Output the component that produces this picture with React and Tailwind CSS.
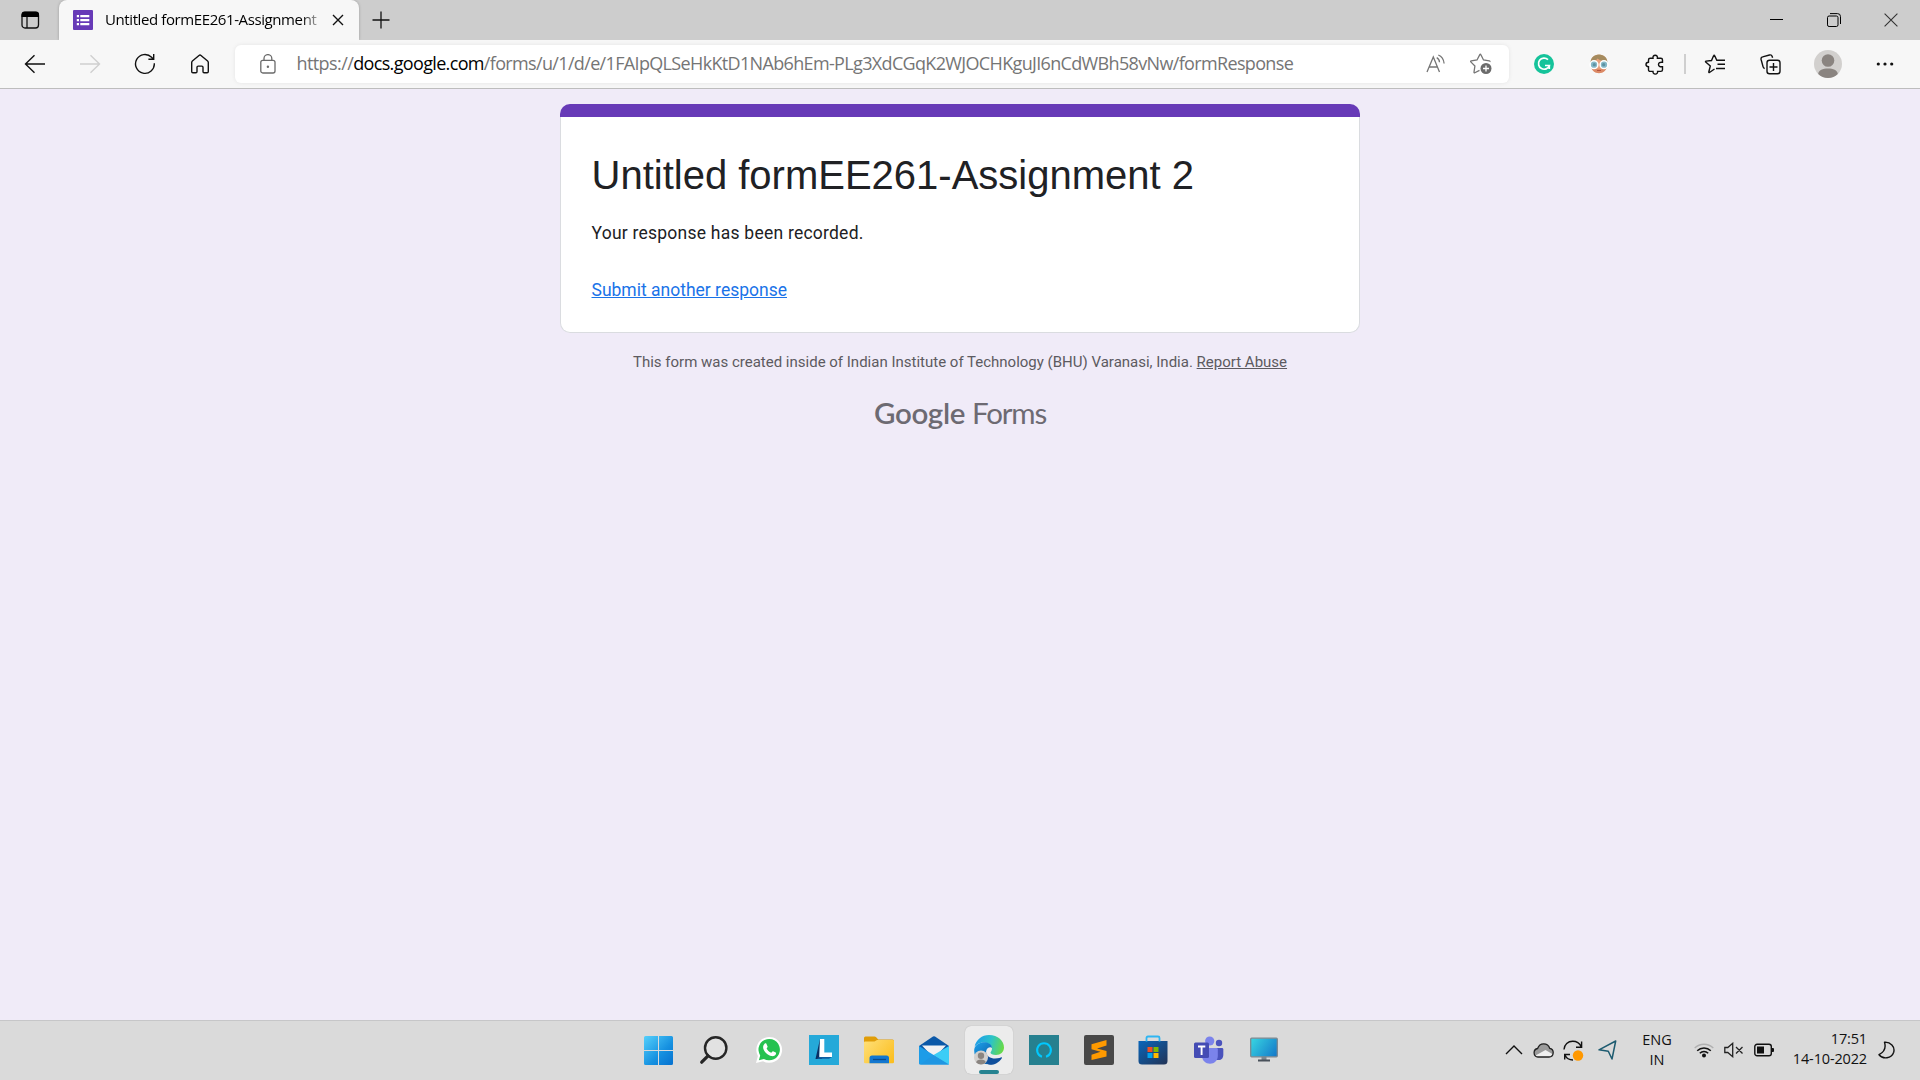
import React from "react";

function Icon({ w, h, className = "", children, ...rest }) {
  return (
    <svg
      width={w}
      height={h}
      viewBox={`0 0 ${w} ${h}`}
      fill="none"
      className={`shrink-0 ${className}`}
      {...rest}
    >
      {children}
    </svg>
  );
}

function Cell({ className = "w-[55px]", children }) {
  return <div className={`flex h-full shrink-0 items-center justify-center ${className}`}>{children}</div>;
}

function TitleBar() {
  return (
    <div className="flex h-10 items-stretch bg-[#cdcdcd]">
      <div className="flex w-[59px] items-center justify-center">
        <Icon w={20} h={20}>
          <rect x="2" y="2.5" width="16.5" height="15.5" rx="3" stroke="#111" strokeWidth="1.3" />
          <path d="M1.5 7V4.5a3 3 0 0 1 3-3h11.5a3 3 0 0 1 3 3V7z" fill="#000" />
          <path d="M7 7v11" stroke="#111" strokeWidth="1.3" />
        </Icon>
      </div>
      <div className="flex w-[300px] items-center rounded-t-lg bg-[#f7f7f7] pl-[14px] shadow-[0_0_3px_rgba(0,0,0,0.25)]">
        <Icon w={20} h={20}>
          <rect width="20" height="20" rx="1" fill="#673ab7" />
          <path d="M7.3 5h9v2.2h-9zM7.3 9h9v2.2h-9zM7.3 13h9v2.2h-9z" fill="#fff" />
          <path d="M3.8 5H6v2.2H3.8zM3.8 9H6v2.2H3.8zM3.8 13H6v2.2H3.8z" fill="#fff" />
        </Icon>
        <div className="mb-[2px] ml-3 w-[213px] whitespace-nowrap bg-linear-to-r from-black from-92% to-black/30 to-100% bg-clip-text text-[15px] leading-5 tracking-[-0.4px] text-transparent">
          Untitled formEE261-Assignment
        </div>
        <Icon w={12} h={12} className="ml-[14px]">
          <path d="M1 1l10 10M11 1L1 11" stroke="#111" strokeWidth="1.4" />
        </Icon>
      </div>
      <div className="flex w-[44px] items-center justify-center">
        <Icon w={18} h={18}>
          <path d="M9 .5v17M.5 9h17" stroke="#111" strokeWidth="1.3" />
        </Icon>
      </div>
      <div className="flex-1" />
      <div className="mb-px flex w-[173px] items-center">
        <Cell className="w-[59px]">
          <Icon w={13} h={13}>
            <path d="M0 6.5h13" stroke="#000" />
          </Icon>
        </Cell>
        <Cell className="w-[56px]">
          <Icon w={14} h={14}>
            <rect x=".5" y="3" width="10.5" height="10.5" rx="1.6" stroke="#000" />
            <path d="M3 .6h7.5a3 3 0 0 1 3 3V11" stroke="#000" />
          </Icon>
        </Cell>
        <Cell className="w-[58px]">
          <Icon w={14} h={14}>
            <path d="M.6.6l12.8 12.8M13.4.6L.6 13.4" stroke="#333" strokeWidth="1.1" />
          </Icon>
        </Cell>
      </div>
    </div>
  );
}

function ToolBar() {
  return (
    <div className="flex h-[49px] items-center border-b border-[#bdbdbd] bg-[#f7f7f7] pl-[7px]">
      <Cell>
        <Icon w={22} h={20}>
          <path d="M21 10H1.5M10.5 1.3L1.5 10l9 8.7" stroke="#111" strokeWidth="1.4" />
        </Icon>
      </Cell>
      <Cell>
        <Icon w={22} h={20}>
          <path d="M1 10h19.5M11.5 1.3l9 8.7-9 8.7" stroke="#cfcfcf" strokeWidth="1.4" />
        </Icon>
      </Cell>
      <Cell>
        <Icon w={22} h={22}>
          <path d="M20.300 10.200A9.400 9.400 0 1 1 17.600 4.300L19 5.800M19.700 1v5.200h-5.300" stroke="#111" strokeWidth="1.4" />
        </Icon>
      </Cell>
      <Cell>
        <Icon w={20} h={20}>
          <path
            d="M1.700 8.500c0-.6.2-1.100.7-1.500L9 1.500c.6-.5 1.400-.5 2 0L17.600 7c.5.4.7.9.7 1.500v9c0 .7-.5 1.200-1.200 1.200h-3c-.6 0-1.100-.5-1.100-1.200v-4.200c0-.7-.5-1.200-1.200-1.200H8.200c-.7 0-1.200.5-1.200 1.200v4.200c0 .7-.5 1.200-1.100 1.200h-3c-.7 0-1.200-.5-1.200-1.200z"
            stroke="#111"
            strokeWidth="1.4"
          />
        </Icon>
      </Cell>
      <div className="ml-2 flex h-[38px] w-[1274px] items-center rounded-md bg-white pl-[25px] shadow-[0_0_4px_rgba(0,0,0,0.08)]">
        <Icon w={16} h={20} className="-mt-px">
          <rect x=".8" y="6.300" width="14.200" height="12.700" rx="2" stroke="#6b6b6b" strokeWidth="1.3" />
          <path d="M4 6.300V4.500a3.900 3.900 0 0 1 7.800 0v1.800" stroke="#6b6b6b" strokeWidth="1.3" />
          <circle cx="7.900" cy="12.700" r="1.200" fill="#6b6b6b" />
        </Icon>
        <div className="mb-[2px] ml-[20.500px] flex w-[1000px] whitespace-nowrap text-[18px] leading-6 tracking-[-0.655px] text-[#757575]">
          <span className="tracking-[-0.59px]">https://</span>
          <span className="text-black">docs.google.com</span>
          <span>/forms/u/1/d/e/1FAIpQLSeHkKtD1NAb6hEm-PLg3XdCGqK2WJOCHKguJI6nCdWBh58vNw/formResponse</span>
        </div>
        <div className="flex-1" />
        <Icon w={20} h={19} className="mr-[24px] -mt-px" stroke="#757575" strokeWidth="1.3">
          <path d="M1 18L7.300 3l6.200 15M3.200 13h8.200" />
          <path d="M10.700 3.600c1.700.9 2.800 2.700 2.800 4.700M12.300 1c3.200 1.200 5.400 4.300 5.800 8.500" />
        </Icon>
        <Icon w={22} h={22} className="mr-[17px]">
          <path
            d="M9.500 17.300l-4.700 2.400c-.5.300-.9 0-.8-.6l.9-6.100L.8 8.900c-.4-.4-.2-.9.400-1l5.800-.9 2.800-5.400c.3-.5.8-.5 1 0L13.500 7l5.800.9c.6.1.8.500.5.900"
            stroke="#757575"
            strokeWidth="1.3"
          />
          <circle cx="16" cy="15.500" r="5.500" fill="#6b6b6b" />
          <path d="M16 12.500v6M13 15.500h6" stroke="#fff" strokeWidth="1.3" />
        </Icon>
      </div>
      <div className="w-[7px]" />
      <Cell>
        <Icon w={20} h={20}>
          <circle cx="10" cy="10" r="10" fill="#15c39a" />
          <path d="M14 5.600A5.600 5.600 0 1 0 15.400 11.500H11M15.300 11.300V15" stroke="#fff" strokeWidth="1.7" />
        </Icon>
      </Cell>
      <Cell>
        <Icon w={20} h={20}>
          <path d="M2 8C2 3.500 5.500.8 10 .8S18 3.500 18 8v4c0 4-4 6.800-8 6.800S2 16 2 12z" fill="#e8a27c" />
          <path d="M1.500 10C1 4 5 .6 10 .6S19 4 18.500 10L16 7.500C13 7 10 6 8.500 4.500 8 6 5 7.500 3.500 8z" fill="#a58b5f" />
          <path d="M2.500 13.500c1 3.800 4 5.700 7.500 5.700s6.500-1.900 7.500-5.700c-2 1.800-13 1.800-15 0z" fill="#dc8a66" />
          <circle cx="5" cy="10.700" r="3.900" fill="#86b9c8" stroke="#fff" strokeWidth="1.5" />
          <circle cx="15" cy="10.700" r="3.900" fill="#86b9c8" stroke="#fff" strokeWidth="1.5" />
          <circle cx="5.300" cy="10.700" r="1.600" fill="#5d92a2" />
          <circle cx="14.700" cy="10.700" r="1.600" fill="#5d92a2" />
          <path d="M8 16.500h4" stroke="#b5533f" />
        </Icon>
      </Cell>
      <Cell>
        <Icon w={20} h={21} className="ml-[2px]">
          <path
            d="M5.200 4.200H8c-.3-1.900.7-3 2.200-3s2.500 1.100 2.200 3h3.400c1 0 1.700.7 1.700 1.700v2.400c-2.600-.4-4 .6-4 2.200s1.400 2.600 4 2.200v3c0 1-.7 1.700-1.700 1.700h-3.200c.2 1.700-.8 2.700-2.300 2.700S7.800 19.100 8 17.400H5.200c-1 0-1.700-.7-1.700-1.700v-3C1.800 12.600 1 11.800 1 10.500s.9-2.200 2.500-2.300V5.900c0-1 .7-1.700 1.700-1.700z"
            stroke="#111"
            strokeWidth="1.4"
          />
        </Icon>
      </Cell>
      <Cell className="w-2">
        <div className="h-5 w-[2px] bg-[#cfcfcf]" />
      </Cell>
      <Cell className="w-[52px]">
        <Icon w={22} h={20}>
          <path
            d="M10.500 15l-5 3.500c-.5.300-.8 0-.7-.5L6.300 12 1.700 8c-.4-.4-.2-.8.300-.9l5.500-.6 2.200-5c.2-.5.7-.5.900 0l2.200 4.700h8.200M13.500 10.300h7.500M12 14.500h9"
            stroke="#111"
            strokeWidth="1.4"
          />
        </Icon>
      </Cell>
      <Cell className="w-[58px]">
        <Icon w={21} h={21} stroke="#111" strokeWidth="1.4">
          <rect x="7" y="6.300" width="13" height="13.500" rx="2.500" />
          <path d="M13.500 9v8M9.500 13h8" />
          <path d="M4.700 14.500c-.9-.3-1.400-.8-1.600-1.600L1.100 5.500c-.3-1.300.2-2.300 1.500-2.600L9.500 1c1.300-.3 2.300.2 2.700 1.500l.4 1.300" />
        </Icon>
      </Cell>
      <Cell className="w-[58px]">
        <Icon w={28} h={28}>
          <circle cx="14" cy="14" r="14" fill="#d2d0ce" />
          <circle cx="14" cy="10.500" r="6.300" fill="#8a8480" />
          <path d="M4.200 24c.5-4 4.500-5.500 9.800-5.500s9.300 1.500 9.800 5.500A14 14 0 0 1 14 28a14 14 0 0 1-9.800-4z" fill="#8a8480" />
        </Icon>
      </Cell>
      <Cell className="w-[56px]">
        <Icon w={18} h={4}>
          <circle cx="2.300" cy="2" r="1.600" fill="#111" />
          <circle cx="9" cy="2" r="1.600" fill="#111" />
          <circle cx="15.700" cy="2" r="1.600" fill="#111" />
        </Icon>
      </Cell>
    </div>
  );
}

function FormPage() {
  return (
    <main className="flex flex-1 flex-col items-center bg-[#f0ebf8] pt-[15px] font-[Roboto,sans-serif]">
      <section className="w-[800px]">
        <div className="h-[13px] rounded-t-[10px] bg-[#673ab7]" />
        <div className="h-[216px] rounded-b-[10px] border border-t-0 border-[#dadce0] bg-white pl-[30.5px] text-[#202124]">
          <h1 className="h-[83px] pt-[33px] font-['Liberation_Sans',Arial,sans-serif] text-[40px] leading-[50px]">
            Untitled formEE261-Assignment 2
          </h1>
          <p className="mt-[21px] text-[17.5px] leading-[25px] tracking-[0.235px]">Your response has been recorded.</p>
          <p className="mt-8 text-[17.5px] leading-[25px]">
            <a className="text-[#1a73e8] underline">Submit another response</a>
          </p>
        </div>
      </section>
      <p className="mt-[18px] text-[15px] leading-[22px] text-[#5c5a60]">
        This form was created inside of Indian Institute of Technology (BHU) Varanasi, India.{" "}
        <a className="underline">Report Abuse</a>
      </p>
      <div className="mt-[20px] flex items-baseline gap-[7px] whitespace-nowrap font-[Lato,sans-serif] text-[29.5px] leading-[40px] text-[#6d6a72]">
        <span className="font-semibold tracking-[-0.35px]">Google</span>
        <span className="tracking-[-1.2px]">Forms</span>
      </div>
    </main>
  );
}

function TaskBar() {
  return (
    <footer className="flex h-[60px] border-t border-[#c6c6c8] bg-[#dadada] pl-[631px]">
      <div className="flex h-[58px]">
        <Cell>
          <Icon w={29} h={29}>
            <defs>
              <linearGradient id="win" x1="0" y1="0" x2="29" y2="29" gradientUnits="userSpaceOnUse">
                <stop stopColor="#55d0fb" />
                <stop offset=".6" stopColor="#1590e0" />
                <stop offset="1" stopColor="#0671cf" />
              </linearGradient>
            </defs>
            <path d="M1.500 0H14v14H0V1.500Q0 0 1.500 0zM15 0h12.500Q29 0 29 1.500V14H15zM0 15h14v14H1.500Q0 29 0 27.500zM15 15h14v12.500q0 1.500-1.500 1.500H15z" fill="url(#win)" />
          </Icon>
        </Cell>
        <Cell>
          <Icon w={29} h={29}>
            <circle cx="16.700" cy="12" r="10.700" stroke="#262626" strokeWidth="2.4" fill="#e2e2e2" />
            <path d="M9 19.800l-6.300 6.400" stroke="#262626" strokeWidth="3.2" strokeLinecap="round" />
          </Icon>
        </Cell>
        <Cell>
          <Icon w={28} h={28}>
            <path d="M1 27l1.900-6.900A12.900 12.900 0 1 1 8 25.200z" fill="#fff" />
            <path d="M3.900 24.200l1.300-4.800A10.700 10.700 0 1 1 8.900 22.900z" fill="#25c250" />
            <path d="M9.800 7.600c.5-.5 1.300-.5 1.600.1l1.200 2.700c.2.500-.7 1.500-1 1.900.9 2 2.400 3.500 4.600 4.500.5-.4 1.400-1.700 1.900-1.500l2.600 1.300c.6.300.4 1.500-.1 2.200-.8 1.100-2.400 1.700-4 1.300-4-1-7.300-4-8.400-7.900-.4-1.700.5-3.600 1.600-4.600z" fill="#fff" />
          </Icon>
        </Cell>
        <Cell>
          <Icon w={30} h={30}>
            <path d="M0 0h30v30H0z" fill="#25a9d9" />
            <path d="M11 4L6.500 24h7l-3-3z" fill="#0a2f63" />
            <path d="M11 4h4.300v13.500H23V22H10.300z" fill="#fff" />
            <path d="M10.300 22H23l-3 1.800H8z" fill="#0e5ea0" />
          </Icon>
        </Cell>
        <Cell>
          <Icon w={30} h={28}>
            <defs>
              <linearGradient id="fold" x1="0" y1="3" x2="30" y2="28" gradientUnits="userSpaceOnUse">
                <stop stopColor="#ffe07a" />
                <stop offset="1" stopColor="#fbbc1a" />
              </linearGradient>
            </defs>
            <path d="M0 2Q0 .5 1.500.500h9q1 0 1.700.8l2 2.200h14.300Q30 3.500 30 5v5H0z" fill="#e09d09" />
            <path d="M0 6.500Q0 5.500 1 5.500h9.500l2.500-1.500h16q1 0 1 1v21q0 1.300-1.300 1.300H1.300Q0 27.300 0 26z" fill="url(#fold)" />
            <path d="M5.500 27.300V22q0-2.500 2.500-2.500h14.500Q25 19.500 25 22v5.300z" fill="#1377d0" />
            <path d="M9 23.500h13" stroke="#0b4a8c" strokeWidth="1.3" />
          </Icon>
        </Cell>
        <Cell>
          <Icon w={30} h={29}>
            <path d="M0 10L14 .600q1-.6 2 0L30 10v6H0z" fill="#0b58a8" />
            <path d="M3 9.500h24L18 19h-6z" fill="#f1f1f3" />
            <path d="M0 10l30 18.500H1q-1 0-1-1z" fill="#1c9ce8" />
            <path d="M30 10v17.500q0 1-1 1L14.500 19z" fill="#3ccdf6" />
            <path d="M14.500 19L30 28.500H1z" fill="#1f96e2" />
          </Icon>
        </Cell>
        <div className="flex w-[55px] items-start justify-center pt-[5px]">
          <div className="flex h-12 w-12 shrink-0 flex-col items-center justify-between rounded-md bg-[#ececec] pt-[9px] shadow-[0_0_1px_rgba(0,0,0,0.25)]">
            <Icon w={30} h={30}>
              <defs>
                <linearGradient id="ed1" x1="2" y1="6" x2="30" y2="14" gradientUnits="userSpaceOnUse">
                  <stop stopColor="#1e9fe8" />
                  <stop offset=".5" stopColor="#2cc3c8" />
                  <stop offset="1" stopColor="#6ddc3c" />
                </linearGradient>
                <linearGradient id="ed2" x1="0" y1="10" x2="16" y2="28" gradientUnits="userSpaceOnUse">
                  <stop stopColor="#1b9de6" />
                  <stop offset="1" stopColor="#0c59a4" />
                </linearGradient>
              </defs>
              <path d="M.5 12C2 4.500 8 0 15 0c9 0 15 6 15 12.500 0 4.500-3.500 7.500-8 7.500-3.500 0-5.500-1.300-5.500-2.500 0-.8 1.500-1.500 1.500-4 0-3-3-6-7.500-6C6 7.500 2 9.500.5 12z" fill="url(#ed1)" />
              <path d="M.3 14C1.500 9.500 6 7.300 10.500 7.300c4.500 0 7.500 2.700 7.500 5.700-1.500-1.500-5.500-.5-6 4C11.300 22 14.500 27 20 28.500 9 32-1 24 .3 14z" fill="url(#ed2)" />
              <path d="M12 16.500C12 21 16.500 23.500 21 23.500c4 0 6-1.500 6.700-1.300.6.200.3.900-.2 1.500C25 27.500 20 30 16 29.800 11 29 9.500 21 12 16.500z" fill="#0f4f9c" />
              <circle cx="7" cy="22.500" r="7" fill="#d2d0ce" />
              <circle cx="7" cy="20.700" r="3.200" fill="#8a8480" />
              <path d="M2.200 27.500c.3-2.200 2.300-3 4.800-3s4.500.8 4.800 3A7 7 0 0 1 7 29.500a7 7 0 0 1-4.800-2z" fill="#8a8480" />
            </Icon>
            <div className="h-1 w-5 rounded-full bg-[#268391]" />
          </div>
        </div>
        <Cell>
          <Icon w={30} h={30}>
            <path d="M0 0h30v30H0z" fill="#26808f" />
            <path d="M13 21.700a6.900 6.900 0 1 1 4 0" stroke="#00c8ff" strokeWidth="2" />
          </Icon>
        </Cell>
        <Cell>
          <Icon w={30} h={30}>
            <rect width="30" height="30" rx="2" fill="#484848" />
            <path d="M22.500 5v5.500L13 13.500l9.500 2.500v5.500L7.500 25v-5.300l9-2.900-9-2.600V9.300z" fill="#ff9a00" />
          </Icon>
        </Cell>
        <Cell>
          <Icon w={30} h={30} className="-ml-px">
            <defs>
              <linearGradient id="store" x1="5" y1="5" x2="25" y2="30" gradientUnits="userSpaceOnUse">
                <stop stopColor="#0a63b5" />
                <stop offset="1" stopColor="#20365c" />
              </linearGradient>
            </defs>
            <path d="M.5 6h29v20q0 3.500-3.500 3.500H4Q.5 29.500.5 26z" fill="url(#store)" />
            <path d="M8.500 6.500V3q0-1.500 1.500-1.500h10q1.500 0 1.500 1.500v3.500" stroke="#2eb5f2" strokeWidth="1.8" />
            <path d="M9.500 12h5v5h-5z" fill="#f25022" />
            <path d="M15.500 12h5v5h-5z" fill="#7fba00" />
            <path d="M9.500 18h5v5h-5z" fill="#00a4ef" />
            <path d="M15.500 18h5v5h-5z" fill="#ffb900" />
          </Icon>
        </Cell>
        <Cell>
          <Icon w={30} h={28}>
            <circle cx="25" cy="7" r="3.200" fill="#4b53bc" />
            <path d="M19 12h9q1.300 0 1.300 1.300V19c0 3-2 5-4.500 5H20z" fill="#4b53bc" />
            <circle cx="15.700" cy="5" r="4.600" fill="#7b83eb" />
            <path d="M9 12h13.500q1.300 0 1.300 1.300V20c0 4.500-3.500 7.700-7.800 7.700S8 24.500 8 20z" fill="#7b83eb" />
            <rect y="6.500" width="15" height="15.500" rx="1.500" fill="#444cb4" />
            <path d="M4 10.500h7.300M7.600 10.500V19" stroke="#fff" strokeWidth="1.9" />
          </Icon>
        </Cell>
        <Cell>
          <Icon w={28} h={26}>
            <defs>
              <linearGradient id="mon" x1="0" y1="0" x2="28" y2="20" gradientUnits="userSpaceOnUse">
                <stop stopColor="#3adbe3" />
                <stop offset="1" stopColor="#1273c8" />
              </linearGradient>
            </defs>
            <path d="M11.500 19h5v4h-5z" fill="#7d8790" />
            <rect x=".7" y="1.200" width="26.600" height="18.600" rx="1" fill="url(#mon)" stroke="#7c8890" strokeWidth="1.3" />
            <path d="M8 22.500h12V24.500H8z" fill="#49515a" />
          </Icon>
        </Cell>
      </div>
      <div className="flex-1" />
      <div className="flex h-[58px] w-[418px] items-center">
        <div className="flex w-[130px] items-center">
          <Icon w={18} h={12} className="ml-[3px]">
            <path d="M1 10l8-8 8 8" stroke="#111" strokeWidth="1.4" />
          </Icon>
          <Icon w={21} h={15} className="ml-[10px]">
            <path d="M5 14a4.300 4.300 0 0 1-.4-8.500C5.500 2.700 8 .8 10.700.8c2.800 0 5.200 1.900 6 4.500A4.400 4.400 0 0 1 16 14z" fill="#9b9b9b" />
            <path d="M5 14a4.300 4.300 0 0 1-2.500-1.500L12.500 7l7.300 4.300A4.400 4.400 0 0 1 16 14z" fill="#f0f0f0" />
            <path d="M5 14a4.300 4.300 0 0 1-.4-8.500C5.500 2.700 8 .8 10.700.8c2.800 0 5.200 1.900 6 4.500A4.400 4.400 0 0 1 16 14z" stroke="#222" strokeWidth="1.3" />
          </Icon>
          <Icon w={21} h={21} className="ml-[9px]">
            <path d="M1 9.500C1.300 4.500 5 1.300 9.700 1.300c3.700 0 7 2.100 8.500 5.300M18.600 1.500v5.700H13M1.700 19.500V14.500H7M2 15c1.200 2.800 4 5 8 5" stroke="#111" strokeWidth="1.4" />
            <circle cx="15" cy="15.500" r="5.200" fill="#ff9800" />
          </Icon>
          <Icon w={19} h={20} className="ml-[14px]">
            <path d="M17.700 1L1 9.800l9.300 1.500L14 19z" stroke="#1d5b70" strokeWidth="1.5" strokeLinejoin="round" />
          </Icon>
        </div>
        <div className="ml-[2px] w-[46px] text-center text-[14.5px] leading-5 text-[#111]">
          <div>ENG</div>
          <div>IN</div>
        </div>
        <Icon w={20} h={16} className="ml-[14px]">
          <path d="M.7 6A13.500 13.500 0 0 1 19.300 6" stroke="#b0b0b0" strokeWidth="1.4" />
          <path d="M3.200 8.700a9.700 9.700 0 0 1 13.600 0M5.800 11.300a6 6 0 0 1 8.400 0" stroke="#111" strokeWidth="1.5" />
          <circle cx="10" cy="13.500" r="2" fill="#111" />
        </Icon>
        <Icon w={20} h={16} className="ml-[10px]">
          <path d="M.8 5.500h3L8.700 1.300v13.400L3.800 10.500h-3zM12 5l6.500 6.500M18.500 5L12 11.500" stroke="#222" strokeWidth="1.3" />
        </Icon>
        <Icon w={21} h={14} className="ml-[10px]">
          <rect x=".8" y="1.300" width="16.500" height="11.400" rx="2.300" stroke="#111" strokeWidth="1.4" />
          <rect x="3" y="3.500" width="7" height="7" fill="#111" />
          <path d="M17.500 5h1.500q1 0 1 1v2q0 1-1 1h-1.500z" fill="#111" />
        </Icon>
        <div className="ml-[11px] w-[81px] pb-[2px] text-right text-[14.5px] leading-5 tracking-[-0.15px] text-[#111]">
          <div>17:51</div>
          <div>14-10-2022</div>
        </div>
        <Icon w={18} h={18} className="ml-[11px]">
          <path d="M6.500 1.200c1.500 5 .5 9.500-5.500 12.500 4 5 12.500 4 14.700-2.500C17.200 5.500 12.500.8 6.500 1.200z" stroke="#111" strokeWidth="1.4" strokeLinejoin="round" />
        </Icon>
      </div>
    </footer>
  );
}

export default function App() {
  return (
    <div className="flex h-screen w-[1920px] flex-col overflow-hidden font-['Open_Sans','Noto_Sans',sans-serif]">
      <TitleBar />
      <ToolBar />
      <FormPage />
      <TaskBar />
    </div>
  );
}
